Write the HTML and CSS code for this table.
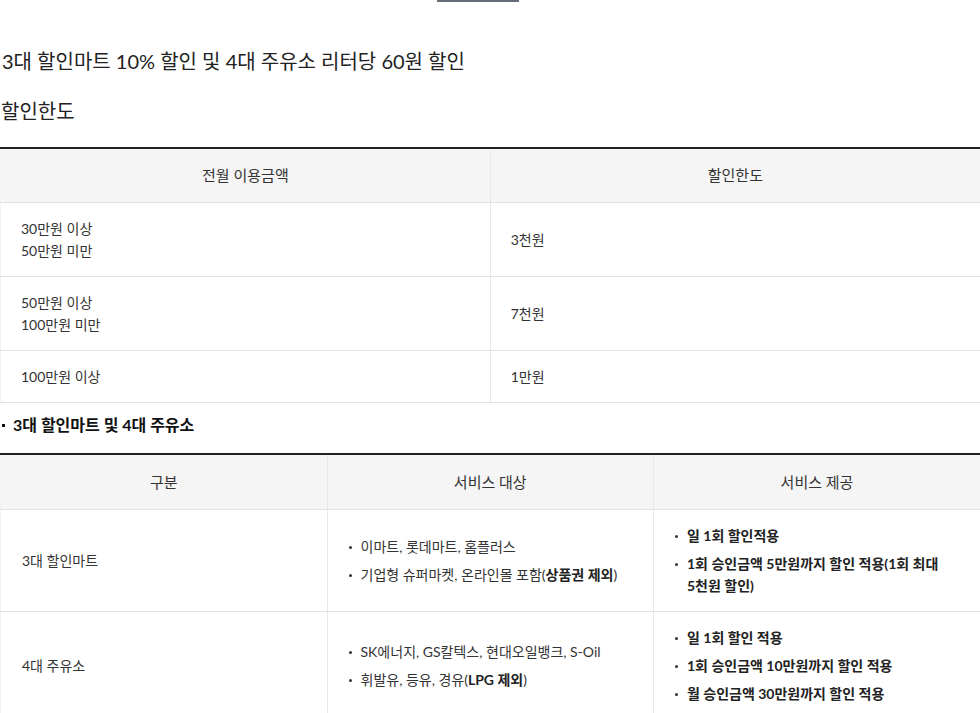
FILE: index.html
```html
<!DOCTYPE html>
<html lang="ko">
<head>
<meta charset="utf-8">
<link rel="stylesheet" href="styles.css">
</head>
<body>
<div class="page">
  <div class="topbar"><span class="tab-line"></span></div>
  <h2 class="title">3대 할인마트 10% 할인 및 4대 주유소 리터당 60원 할인</h2>
  <h3 class="subtitle">할인한도</h3>
  <table class="tbl tbl-limit">
    <thead>
      <tr><th>전월 이용금액</th><th>할인한도</th></tr>
    </thead>
    <tbody>
      <tr><td>30만원 이상<br>50만원 미만</td><td>3천원</td></tr>
      <tr><td>50만원 이상<br>100만원 미만</td><td>7천원</td></tr>
      <tr><td>100만원 이상</td><td>1만원</td></tr>
    </tbody>
  </table>
  <p class="dot-title">3대 할인마트 및 4대 주유소</p>
  <table class="tbl tbl-service">
    <thead>
      <tr><th>구분</th><th>서비스 대상</th><th>서비스 제공</th></tr>
    </thead>
    <tbody>
      <tr>
        <td>3대 할인마트</td>
        <td>
          <ul class="dots">
            <li>이마트, 롯데마트, 홈플러스</li>
            <li>기업형 슈퍼마켓, 온라인몰 포함(<b>상품권 제외</b>)</li>
          </ul>
        </td>
        <td>
          <ul class="dots bold">
            <li>일 1회 할인적용</li>
            <li>1회 승인금액 5만원까지 할인 적용(1회 최대 5천원 할인)</li>
          </ul>
        </td>
      </tr>
      <tr>
        <td>4대 주유소</td>
        <td>
          <ul class="dots">
            <li>SK에너지, GS칼텍스, 현대오일뱅크, S-Oil</li>
            <li>휘발유, 등유, 경유(<b>LPG 제외</b>)</li>
          </ul>
        </td>
        <td>
          <ul class="dots bold">
            <li>일 1회 할인 적용</li>
            <li>1회 승인금액 10만원까지 할인 적용</li>
            <li>월 승인금액 30만원까지 할인 적용</li>
          </ul>
        </td>
      </tr>
    </tbody>
  </table>
</div>
</body>
</html>
```
FILE: styles.css
```css
* { box-sizing: border-box; }
html, body { margin: 0; padding: 0; background: #fff; }
body {
  font-family: "Lato", "Noto Sans CJK KR", sans-serif;
  color: #333;
  font-size: 14px;
}
.page { width: 980px; }
.topbar { height: 2px; display: flex; justify-content: center; }
.tab-line { display: block; width: 82px; height: 2px; background: #666d78; margin-left: -24px; }
.title {
  margin: 0;
  padding-top: 46px;
  font-size: 20px;
  line-height: 26px;
  font-weight: 400;
  color: #222;
  padding-left: 2px;
}
.subtitle {
  margin: 0;
  padding-top: 24px;
  font-size: 20px;
  line-height: 26px;
  font-weight: 400;
  color: #222;
  padding-left: 1px;
}
.tbl {
  width: 980px;
  border-collapse: collapse;
  table-layout: fixed;
  border-top: 2px solid #222;
}
.tbl-limit { margin-top: 23px; }
.tbl th {
  background: #f5f5f5;
  font-weight: 400;
  font-size: 15px;
  line-height: 24px;
  color: #333;
  text-align: center;
  border-bottom: 1px solid #e2e2e2;
  border-left: 1px solid #e8e8e8;
}
.tbl td {
  text-align: left;
  vertical-align: middle;
  padding: 15px 20px 14px 20px;
  line-height: 22px;
  border-bottom: 1px solid #e2e2e2;
  border-left: 1px solid #e8e8e8;
  word-break: keep-all;
}
.tbl th:first-child, .tbl td:first-child { border-left: 1px solid #f2f2f2; }
.tbl-limit th { height: 54px; padding: 0; }
.dot-title {
  margin: 0;
  padding: 11px 0 0 13px;
  position: relative;
  font-size: 16px;
  line-height: 22px;
  font-weight: 700;
  color: #111;
}
.dot-title::before {
  content: "";
  position: absolute;
  left: 2px;
  top: 21px;
  width: 3px;
  height: 3px;
  background: #111;
}
.tbl-service { margin-top: 17px; }
.tbl-service th { height: 56px; padding: 0; }
.tbl-service td { padding: 15px 20px 14px 21px; }
.dots { list-style: none; margin: 0; padding: 0; }
.dots li {
  position: relative;
  padding-left: 12px;
  line-height: 22px;
}
.dots li + li { margin-top: 6px; }
.dots li::before {
  content: "";
  position: absolute;
  left: 0;
  top: 10px;
  width: 3px;
  height: 3px;
  border-radius: 50%;
  background: #333;
}
.dots.bold li { font-weight: 700; color: #222; }
.dots b { font-weight: 700; color: #222; }
```
